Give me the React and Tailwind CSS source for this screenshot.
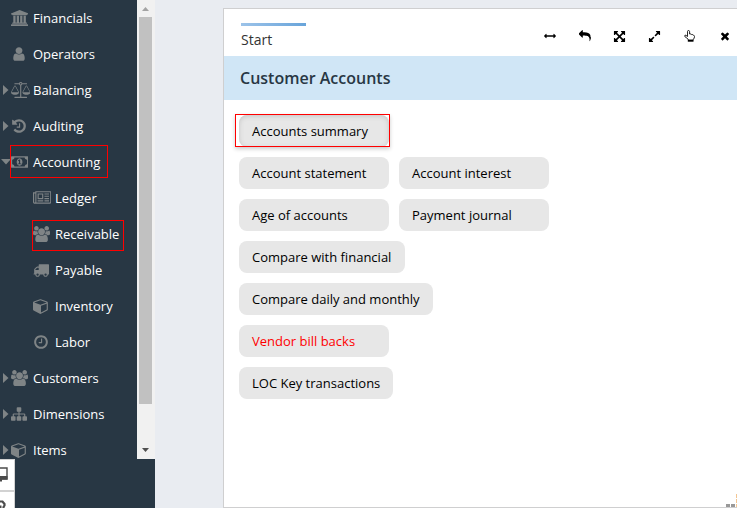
import React from "react";

const icons = {
  university: [1920, "M960 0l960 384v128h-128q0 26-20.5 45t-48.5 19h-1526q-28 0-48.5-19t-20.5-45h-128v-128zm-704 640h256v768h128v-768h256v768h128v-768h256v768h128v-768h256v768h59q28 0 48.5 19t20.5 45v64h-1664v-64q0-26 20.5-45t48.5-19h59v-768zm1595 960q28 0 48.5 19t20.5 45v128h-1920v-128q0-26 20.5-45t48.5-19h1782z"],
  user: [1792, "M1536 1399q0 109-62.5 187t-150.5 78h-854q-88 0-150.5-78t-62.5-187q0-85 8.5-160.5t31.5-152 58.5-131 94-89 134.5-34.5q131 128 313 128t313-128q76 0 134.5 34.5t94 89 58.5 131 31.5 152 8.5 160.5zm-256-887q0 159-112.5 271.5t-271.5 112.5-271.5-112.5-112.5-271.5 112.5-271.5 271.5-112.5 271.5 112.5 112.5 271.5z"],
  scale: [2176, "M1728 448l-384 704h768zm-1280 0l-384 704h768zm821-192q-14 40-45.5 71.5t-71.5 45.5v1291h608q14 0 23 9t9 23v64q0 14-9 23t-23 9h-1344q-14 0-23-9t-9-23v-64q0-14 9-23t23-9h608v-1291q-40-14-71.5-45.5t-45.5-71.5h-491q-14 0-23-9t-9-23v-64q0-14 9-23t23-9h491q21-57 70-92.5t111-35.5 111 35.5 70 92.5h491q14 0 23 9t9 23v64q0 14-9 23t-23 9h-491zm-181 16q33 0 56.5-23.5t23.5-56.5-23.5-56.5-56.5-23.5-56.5 23.5-23.5 56.5 23.5 56.5 56.5 23.5zm1088 880q0 73-46.5 131t-117.5 91-144.5 49.5-139.5 16.5-139.5-16.5-144.5-49.5-117.5-91-46.5-131q0-11 35-81t92-174.5 107-195.5 102-184 56-100q18-33 56-33t56 33q4 7 56 100t102 184 107 195.5 92 174.5 35 81zm-1280 0q0 73-46.5 131t-117.5 91-144.5 49.5-139.5 16.5-139.5-16.5-144.5-49.5-117.5-91-46.5-131q0-11 35-81t92-174.5 107-195.5 102-184 56-100q18-33 56-33t56 33q4 7 56 100t102 184 107 195.5 92 174.5 35 81z"],
  history: [1792, "M1664 896q0 156-61 298t-164 245-245 164-298 61q-172 0-327-72.5t-264-204.5q-7-10-6.5-22.5t8.5-20.5l137-138q10-9 25-9 16 2 23 12 73 95 179 147t225 52q104 0 198.5-40.5t163.5-109.5 109.5-163.5 40.5-198.5-40.5-198.5-109.5-163.5-163.5-109.5-198.5-40.5q-98 0-188 35.5t-160 101.5l137 138q31 30 14 69-17 40-59 40h-448q-26 0-45-19t-19-45v-448q0-42 40-59 39-17 69 14l130 129q107-101 244.5-156.5t284.5-55.5q156 0 298 61t245 164 164 245 61 298zm-640-288v448q0 14-9 23t-23 9h-320q-14 0-23-9t-9-23v-64q0-14 9-23t23-9h224v-352q0-14 9-23t23-9h64q14 0 23 9t9 23z"],
  money: [1920, "M768 1152h384v-96h-128v-448h-114l-148 137 77 80q42-37 55-57h2v288h-128v96zm512-256q0 70-21 142t-59.5 134-101.5 101-138 39-138-39-101.5-101-59.5-134-21-142 21-142 59.5-134 101.5-101 138-39 138 39 101.5 101 59.5 134 21 142zm512 256v-512q-106 0-181-75t-75-181h-1152q0 106-75 181t-181 75v512q106 0 181 75t75 181h1152q0-106 75-181t181-75zm128-832v1152q0 26-19 45t-45 19h-1792q-26 0-45-19t-19-45v-1152q0-26 19-45t45-19h1792q26 0 45 19t19 45z"],
  newspaper: [2048, "M1024 512h-384v384h384v-384zm128 640v128h-640v-128h640zm0-768v640h-640v-640h640zm640 768v128h-512v-128h512zm0-256v128h-512v-128h512zm0-256v128h-512v-128h512zm0-256v128h-512v-128h512zm-1536 960v-960h-128v960q0 26 19 45t45 19 45-19 19-45zm1664 0v-1088h-1536v1088q0 33-11 64h1483q26 0 45-19t19-45zm128-1216v1216q0 80-56 136t-136 56h-1664q-80 0-136-56t-56-136v-1088h256v-128h1792z"],
  users: [1920, "M593 896q-162 5-265 128h-134q-82 0-138-40.5t-56-118.5q0-353 124-353 6 0 43.5 21t97.5 42.5 119 21.5q67 0 133-23-5 37-5 66 0 139 81 256zm1071 637q0 120-73 189.5t-194 69.5h-874q-121 0-194-69.5t-73-189.5q0-53 3.5-103.5t14-109 26.5-108.5 43-97.5 62-81 85.5-53.5 111.5-20q10 0 43 21.5t73 48 107 48 135 21.5 135-21.5 107-48 73-48 43-21.5q61 0 111.5 20t85.5 53.5 62 81 43 97.5 26.5 108.5 14 109 3.5 103.5zm-1024-1277q0 106-75 181t-181 75-181-75-75-181 75-181 181-75 181 75 75 181zm704 384q0 159-112.5 271.5t-271.5 112.5-271.5-112.5-112.5-271.5 112.5-271.5 271.5-112.5 271.5 112.5 112.5 271.5zm576 225q0 78-56 118.5t-138 40.5h-134q-103-123-265-128 81-117 81-256 0-29-5-66 66 23 133 23 59 0 119-21.5t97.5-42.5 43.5-21q124 0 124 353zm-128-609q0 106-75 181t-181 75-181-75-75-181 75-181 181-75 181 75 75 181z"],
  truck: [1792, "M640 1408q0-52-38-90t-90-38-90 38-38 90 38 90 90 38 90-38 38-90zm-384-512h384v-256h-158q-13 0-22 9l-195 195q-9 9-9 22v30zm1280 512q0-52-38-90t-90-38-90 38-38 90 38 90 90 38 90-38 38-90zm256-1088v1024q0 15-4 26.5t-13.5 18.5-16.5 11.5-23.5 6-22.5 2-25.5 0-22.5-.5q0 106-75 181t-181 75-181-75-75-181h-384q0 106-75 181t-181 75-181-75-75-181h-64q-3 0-22.5.5t-25.5 0-22.5-2-23.5-6-16.5-11.5-13.5-18.5-4-26.5q0-26 19-45t45-19v-320q0-8-.5-35t0-38 2.5-34.5 6.5-37 14-30.5 22.5-30l198-198q19-19 50.5-32t58.5-13h160v-192q0-26 19-45t45-19h1024q26 0 45 19t19 45z"],
  cube: [1664, "M896 1629l640-349v-636l-640 233v752zm-64-865l698-254-698-254-698 254zm832-252v768q0 35-18 65t-49 47l-704 384q-28 16-61 16t-61-16l-704-384q-31-17-49-47t-18-65v-768q0-40 23-73t61-47l704-256q22-8 44-8t44 8l704 256q38 14 61 47t23 73z"],
  clock: [1792, "M1024 544v448q0 14-9 23t-23 9h-320q-14 0-23-9t-9-23v-64q0-14 9-23t23-9h224v-352q0-14 9-23t23-9h64q14 0 23 9t9 23zm416 352q0-148-73-273t-198-198-273-73-273 73-198 198-73 273 73 273 198 198 273 73 273-73 198-198 73-273zm224 0q0 209-103 385.5t-279.5 279.5-385.5 103-385.5-103-279.5-279.5-103-385.5 103-385.5 279.5-279.5 385.5-103 385.5 103 279.5 279.5 103 385.5z"],
  sitemap: [1792, "M1792 1248v320q0 40-28 68t-68 28h-320q-40 0-68-28t-28-68v-320q0-40 28-68t68-28h96v-192h-512v192h96q40 0 68 28t28 68v320q0 40-28 68t-68 28h-320q-40 0-68-28t-28-68v-320q0-40 28-68t68-28h96v-192h-512v192h96q40 0 68 28t28 68v320q0 40-28 68t-68 28h-320q-40 0-68-28t-28-68v-320q0-40 28-68t68-28h96v-192q0-52 38-90t90-38h512v-192h-96q-40 0-68-28t-28-68v-320q0-40 28-68t68-28h320q40 0 68 28t28 68v320q0 40-28 68t-68 28h-96v192h512q52 0 90 38t38 90v192h96q40 0 68 28t28 68z"],
  arrowsH: [1792, "M1792 896q0 26-19 45l-256 256q-19 19-45 19t-45-19-19-45v-128h-1024v128q0 26-19 45t-45 19-45-19l-256-256q-19-19-19-45t19-45l256-256q19-19 45-19t45 19 19 45v128h1024v-128q0-26 19-45t45-19 45 19l256 256q19 19 19 45z"],
  reply: [1792, "M1792 1120q0 166-127 451-3 7-10.5 24t-13.5 30-13 22q-12 17-28 17-15 0-23.5-10t-8.5-25q0-9 2.5-26.5t2.5-23.5q5-68 5-123 0-112-19.5-200.5t-54-153.5-89-112-117.5-78.5-146.5-46.5-168-23-190.5-6.5h-224v256q0 26-19 45t-45 19-45-19l-512-512q-19-19-19-45t19-45l512-512q19-19 45-19t45 19 19 45v256h224q713 0 875 403 53 134 53 333z"],
  arrowsAlt: [1792, "M1411 541l-355 355 355 355 144-144q29-31 70-14 39 17 39 59v448q0 26-19 45t-45 19h-448q-42 0-59-40-17-39 14-69l144-144-355-355-355 355 144 144q31 30 14 69-17 40-59 40h-448q-26 0-45-19t-19-45v-448q0-42 40-59 39-17 69 14l144 144 355-355-355-355-144 144q-19 19-45 19-12 0-24-5-40-17-40-59v-448q0-26 19-45t45-19h448q42 0 59 40 17 39-14 69l-144 144 355 355 355-355-144-144q-31-30-14-69 17-40 59-40h448q26 0 45 19t19 45v448q0 42-39 59-13 5-25 5-26 0-45-19z"],
  expand: [1792, "M883 1056q0 13-10 23l-332 332 144 144q19 19 19 45t-19 45-45 19h-448q-26 0-45-19t-19-45v-448q0-26 19-45t45-19 45 19l144 144 332-332q10-10 23-10t23 10l114 114q10 10 10 23zm781-864v448q0 26-19 45t-45 19-45-19l-144-144-332 332q-10 10-23 10t-23-10l-114-114q-10-10-10-23t10-23l332-332-144-144q-19-19-19-45t19-45 45-19h448q26 0 45 19t19 45z"],
  times: [1792, "M1490 1322q0 40-28 68l-136 136q-28 28-68 28t-68-28l-294-294-294 294q-28 28-68 28t-68-28l-136-136q-28-28-28-68t28-68l294-294-294-294q-28-28-28-68t28-68l136-136q28-28 68-28t68 28l294 294 294-294q28-28 68-28t68 28l136 136q28 28 28 68t-28 68l-294 294 294 294q28 28 28 68z"],
};

function Icon({ name, className }) {
  const [w, d] = icons[name];
  return (
    <svg viewBox={`0 0 ${w} 1792`} className={`w-auto shrink-0 fill-current ${className}`}>
      <path d={d} />
    </svg>
  );
}

const menu = [
  { label: "Financials", icon: "university" },
  { label: "Operators", icon: "user" },
  { label: "Balancing", icon: "scale", arrow: "right" },
  { label: "Auditing", icon: "history", arrow: "right" },
  { label: "Accounting", icon: "money", arrow: "down", mark: "-left-px top-0 h-[33px] w-[98px]" },
  { label: "Ledger", icon: "newspaper", child: true },
  { label: "Receivable", icon: "users", child: true, mark: "-left-px top-[3px] h-[31px] w-[92px]" },
  { label: "Payable", icon: "truck", child: true },
  { label: "Inventory", icon: "cube", child: true },
  { label: "Labor", icon: "clock", child: true },
  { label: "Customers", icon: "users", arrow: "right" },
  { label: "Dimensions", icon: "sitemap", arrow: "right" },
  { label: "Items", icon: "cube", arrow: "right" },
];

function MenuItem({ label, icon, arrow, child, mark }) {
  return (
    <li className={`flex h-9 shrink-0 items-center ${child ? "pl-[22px]" : ""}`}>
      <span className="flex w-[11px] shrink-0 items-center text-[#7f8486]">
        {arrow === "right" && (
          <svg viewBox="0 0 6 10" className="ml-[3px] h-[10px] w-[6px] fill-current"><path d="M0 0L5.5 5L0 10z" /></svg>
        )}
        {arrow === "down" && (
          <svg viewBox="0 0 10 6" className="ml-px h-[6px] w-[10px] shrink-0 fill-current"><path d="M0 0H10L5 5.5z" /></svg>
        )}
      </span>
      <span className="relative flex h-[34px] items-center">
        {mark && <span className={`absolute z-10 border border-[#f00] ${mark}`} />}
        <span className="flex w-[22px] shrink-0 text-[#7f8486]"><Icon name={icon} className="h-4" /></span>
        <span className="text-[13px] leading-4 whitespace-nowrap text-white">{label}</span>
      </span>
    </li>
  );
}

const rows = [
  ["Accounts summary"],
  ["Account statement", "Account interest"],
  ["Age of accounts", "Payment journal"],
  ["Compare with financial"],
  ["Compare daily and monthly"],
  ["Vendor bill backs"],
  ["LOC Key transactions"],
];

export default function App() {
  return (
    <div className="flex h-[508px] w-[737px] overflow-hidden bg-[#e9ecf1] font-['Open_Sans',sans-serif]">
      <aside className="flex w-[155px] shrink-0 flex-col bg-[#283744]">
        <div className="flex h-[459px] shrink-0">
          <ul className="flex w-[137px] flex-col overflow-hidden">
            {menu.map((m) => <MenuItem key={m.label} {...m} />)}
          </ul>
          <div className="flex w-[17px] flex-col items-center bg-[#f1f1f1]">
            <div className="flex h-[17px] items-center">
              <svg viewBox="0 0 7 4" className="h-1 w-[7px] fill-[#a3a3a3]"><path d="M3.5 0L7 4H0z" /></svg>
            </div>
            <div className="h-[387px] w-[13px] bg-[#c1c1c1]" />
            <div className="flex grow items-end pb-[7px]">
              <svg viewBox="0 0 7 4" className="h-1 w-[7px] fill-[#505050]"><path d="M0 0H7L3.5 4z" /></svg>
            </div>
          </div>
          <div className="w-px bg-[#f1f1f1]" />
        </div>
        <div className="flex w-[15px] grow flex-col overflow-hidden border-t border-r border-[#d2d2d2] bg-white">
          <div className="h-[32px] shrink-0 border-b-2 border-[#d2d2d2] pt-[7px]">
            <svg viewBox="0 0 10 16" className="h-4 w-[8px]" preserveAspectRatio="xMinYMin slice">
              <path d="M-4 1H7V12H-4z" fill="#fff" stroke="#4b4b4b" strokeWidth="1.4" />
              <path d="M-4 9H7.5V12.5H2V14.5H-4z" fill="#4b4b4b" />
            </svg>
          </div>
          <div className="h-[16px] shrink-0 pt-[8px]">
            <svg viewBox="0 0 10 9" className="h-[9px] w-[10px]">
              <path d="M0 1.5H2.5L4.5 4V5.5L3.5 7V9" fill="none" stroke="#4b4b4b" strokeWidth="2.2" />
              <path d="M0 5.5H1.5V9H0z" fill="#4b4b4b" />
            </svg>
          </div>
        </div>
      </aside>

      <main className="mt-2 ml-[68px] flex w-[530px] shrink-0 flex-col border border-[#cfcfd0] bg-white">
        <div className="flex h-[47px] shrink-0 items-start">
          <div className="mt-[14px] ml-[17px] w-[65px]">
            <div className="h-[3px] bg-linear-to-r from-[#9cc3e9] to-[#68a4da]" />
            <div className="mt-[4px] text-sm leading-5 text-[#333]">Start</div>
          </div>
          <div className="mt-[20px] ml-[226px] flex h-[14px] items-center text-black">
            <span className="flex w-[35px] justify-center"><Icon name="arrowsH" className="h-3" /></span>
            <span className="flex w-[35px] justify-center"><Icon name="reply" className="h-3" /></span>
            <span className="flex w-[35px] justify-center"><Icon name="arrowsAlt" className="h-[13px]" /></span>
            <span className="flex w-[35px] justify-center"><Icon name="expand" className="h-[13px]" /></span>
            <span className="flex w-[35px] justify-center">
              <svg viewBox="0 0 11 12" className="h-3 w-[11px] fill-none stroke-black">
                <path d="M3.5 6.5V1.6Q3.5.5 4.5.5T5.6 1.6V4Q7.3 3.6 7.7 4.6Q9 4.3 9.3 5.2Q10.5 5.3 10.5 6.5Q10.5 8 9.3 9.5V10H4V9.2Q3 7.8 1 6.8Q.2 6 1 5.2Q1.6 4.8 3.5 6.5" strokeWidth="0.85" />
                <path d="M3.8 10H9.5V11.7H3.8z" className="fill-black stroke-none" />
              </svg>
            </span>
            <span className="flex w-[35px] justify-center"><Icon name="times" className="h-3" /></span>
          </div>
        </div>
        <h1 className="flex h-[44px] shrink-0 items-center bg-[#d0e6f6] pl-4 text-base font-semibold text-[#283744]">Customer Accounts</h1>
        <div className="mt-[15px] ml-[15px] flex flex-col gap-[10px]">
          {rows.map((row, i) => (
            <div key={row[0]} className="flex gap-[10px]">
              {row.map((label) => (
                <button
                  key={label}
                  className={`relative h-8 min-w-[150px] rounded-lg bg-[#e7e7e7] pt-[2px] pl-[13px] text-left text-[13px] whitespace-nowrap ${label === "Compare with financial" ? "pr-[14px]" : "pr-[13px]"} ${label === "Vendor bill backs" ? "text-[#f00]" : "text-black"} ${i === 0 ? "shadow-[inset_0_1px_5px_#c4c4c4]" : ""}`}
                >
                  {label}
                  {i === 0 && <span className="absolute -top-px -left-1 h-[33px] w-[155px] border border-[#f00] shadow-[0_2px_4px_#00000033]" />}
                </button>
              ))}
            </div>
          ))}
        </div>
        <div className="mt-auto flex items-end justify-end gap-px pr-[15px]">
          <span className="h-[3px] w-[4px] bg-[#999]" />
          <span className="h-[3px] w-[4px] bg-[#999]" />
          <span className="flex flex-col gap-px"><span className="h-[4px] w-px bg-[#f3c693]" /><span className="h-[4px] w-px bg-[#f3c693]" /><span className="h-[3px] w-px bg-[#f3c693]" /></span>
        </div>
      </main>
    </div>
  );
}
